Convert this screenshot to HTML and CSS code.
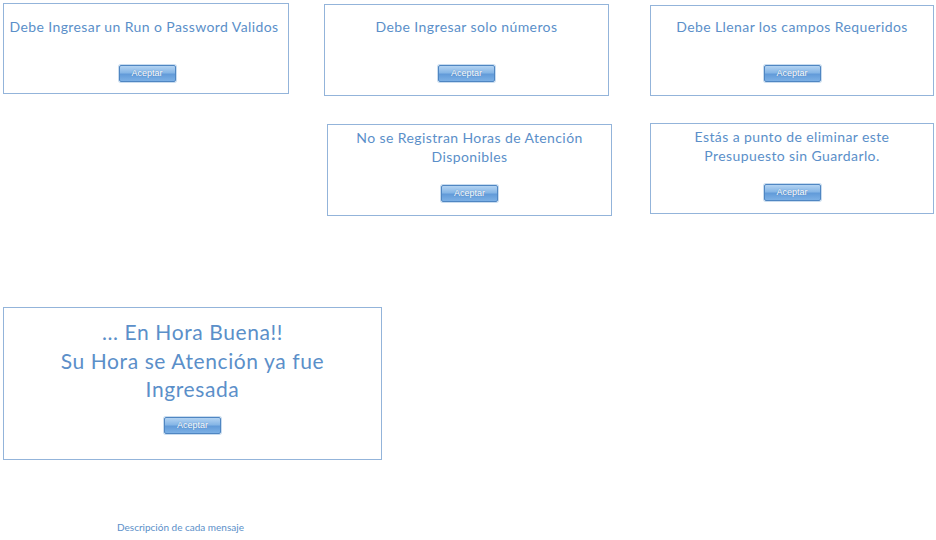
FILE: index.html
```html
<!DOCTYPE html>
<html lang="es">
<head>
<meta charset="utf-8">
<link rel="stylesheet" href="styles.css">
</head>
<body>
<div class="canvas">
  <div class="box b1">
    <p class="msg">Debe Ingresar un Run o Password Validos</p>
    <button class="btn">Aceptar</button>
  </div>
  <div class="box b2">
    <p class="msg">Debe Ingresar solo números</p>
    <button class="btn">Aceptar</button>
  </div>
  <div class="box b3">
    <p class="msg">Debe Llenar los campos Requeridos</p>
    <button class="btn">Aceptar</button>
  </div>
  <div class="box b4">
    <p class="msg">No se Registran Horas de Atención<br>Disponibles</p>
    <button class="btn">Aceptar</button>
  </div>
  <div class="box b5">
    <p class="msg">Estás a punto de eliminar este<br>Presupuesto sin Guardarlo.</p>
    <button class="btn">Aceptar</button>
  </div>
  <div class="box b6">
    <p class="msg big">... En Hora Buena!!<br>Su Hora se Atención ya fue<br>Ingresada</p>
    <button class="btn">Aceptar</button>
  </div>
  <p class="caption">Descripción de cada mensaje</p>
</div>
</body>
</html>
```
FILE: styles.css
```css
html, body {
  margin: 0;
  padding: 0;
  background: #ffffff;
}
.canvas {
  position: relative;
  width: 936px;
  height: 540px;
  font-family: Lato, "Open Sans", sans-serif;
}
.box {
  position: absolute;
  box-sizing: border-box;
  border: 1px solid #93b4da;
  background: #ffffff;
  display: flex;
  flex-direction: column;
  align-items: center;
}
.msg {
  margin: 0;
  color: #5b8fc9;
  font-size: 14px;
  line-height: 19px;
  text-align: center;
  letter-spacing: 0.4px;
}
.big {
  font-size: 21px;
  line-height: 28.5px;
  letter-spacing: 0.6px;
}
.btn {
  width: 57px;
  height: 17px;
  padding: 0;
  border: 1px solid #4f86c2;
  border-radius: 2px;
  background: linear-gradient(#b3d3f2 0%, #86b6e6 45%, #629bd9 55%, #7cb0e5 100%);
  color: #ffffff;
  font-family: "Liberation Sans", sans-serif;
  font-size: 9px;
  line-height: 15px;
  text-shadow: 0 0 1px #3f76b3;
  box-shadow: 0 0 0 1px #c9dcef;
}
.b1 { left: 3px; top: 3px; width: 286px; height: 91px; padding-top: 13px; }
.b1 .msg { margin-right: 4px; }
.b1 .btn { margin-top: 29px; margin-left: 2px; }
.b2 { left: 324px; top: 4px; width: 285px; height: 92px; padding-top: 12px; }
.b2 .btn { margin-top: 29px; }
.b3 { left: 650px; top: 5px; width: 284px; height: 91px; padding-top: 11px; }
.b3 .btn { margin-top: 29px; }
.b4 { left: 327px; top: 124px; width: 285px; height: 92px; padding-top: 3px; }
.b4 .btn { margin-top: 19px; }
.b5 { left: 650px; top: 123px; width: 284px; height: 91px; padding-top: 3px; }
.b5 .btn { margin-top: 19px; }
.b6 { left: 3px; top: 307px; width: 379px; height: 153px; padding-top: 10px; }
.b6 .btn { margin-top: 13px; }
.caption {
  position: absolute;
  left: 117px;
  top: 521px;
  margin: 0;
  color: #5b8fc9;
  font-size: 10px;
  line-height: 12px;
}
```
